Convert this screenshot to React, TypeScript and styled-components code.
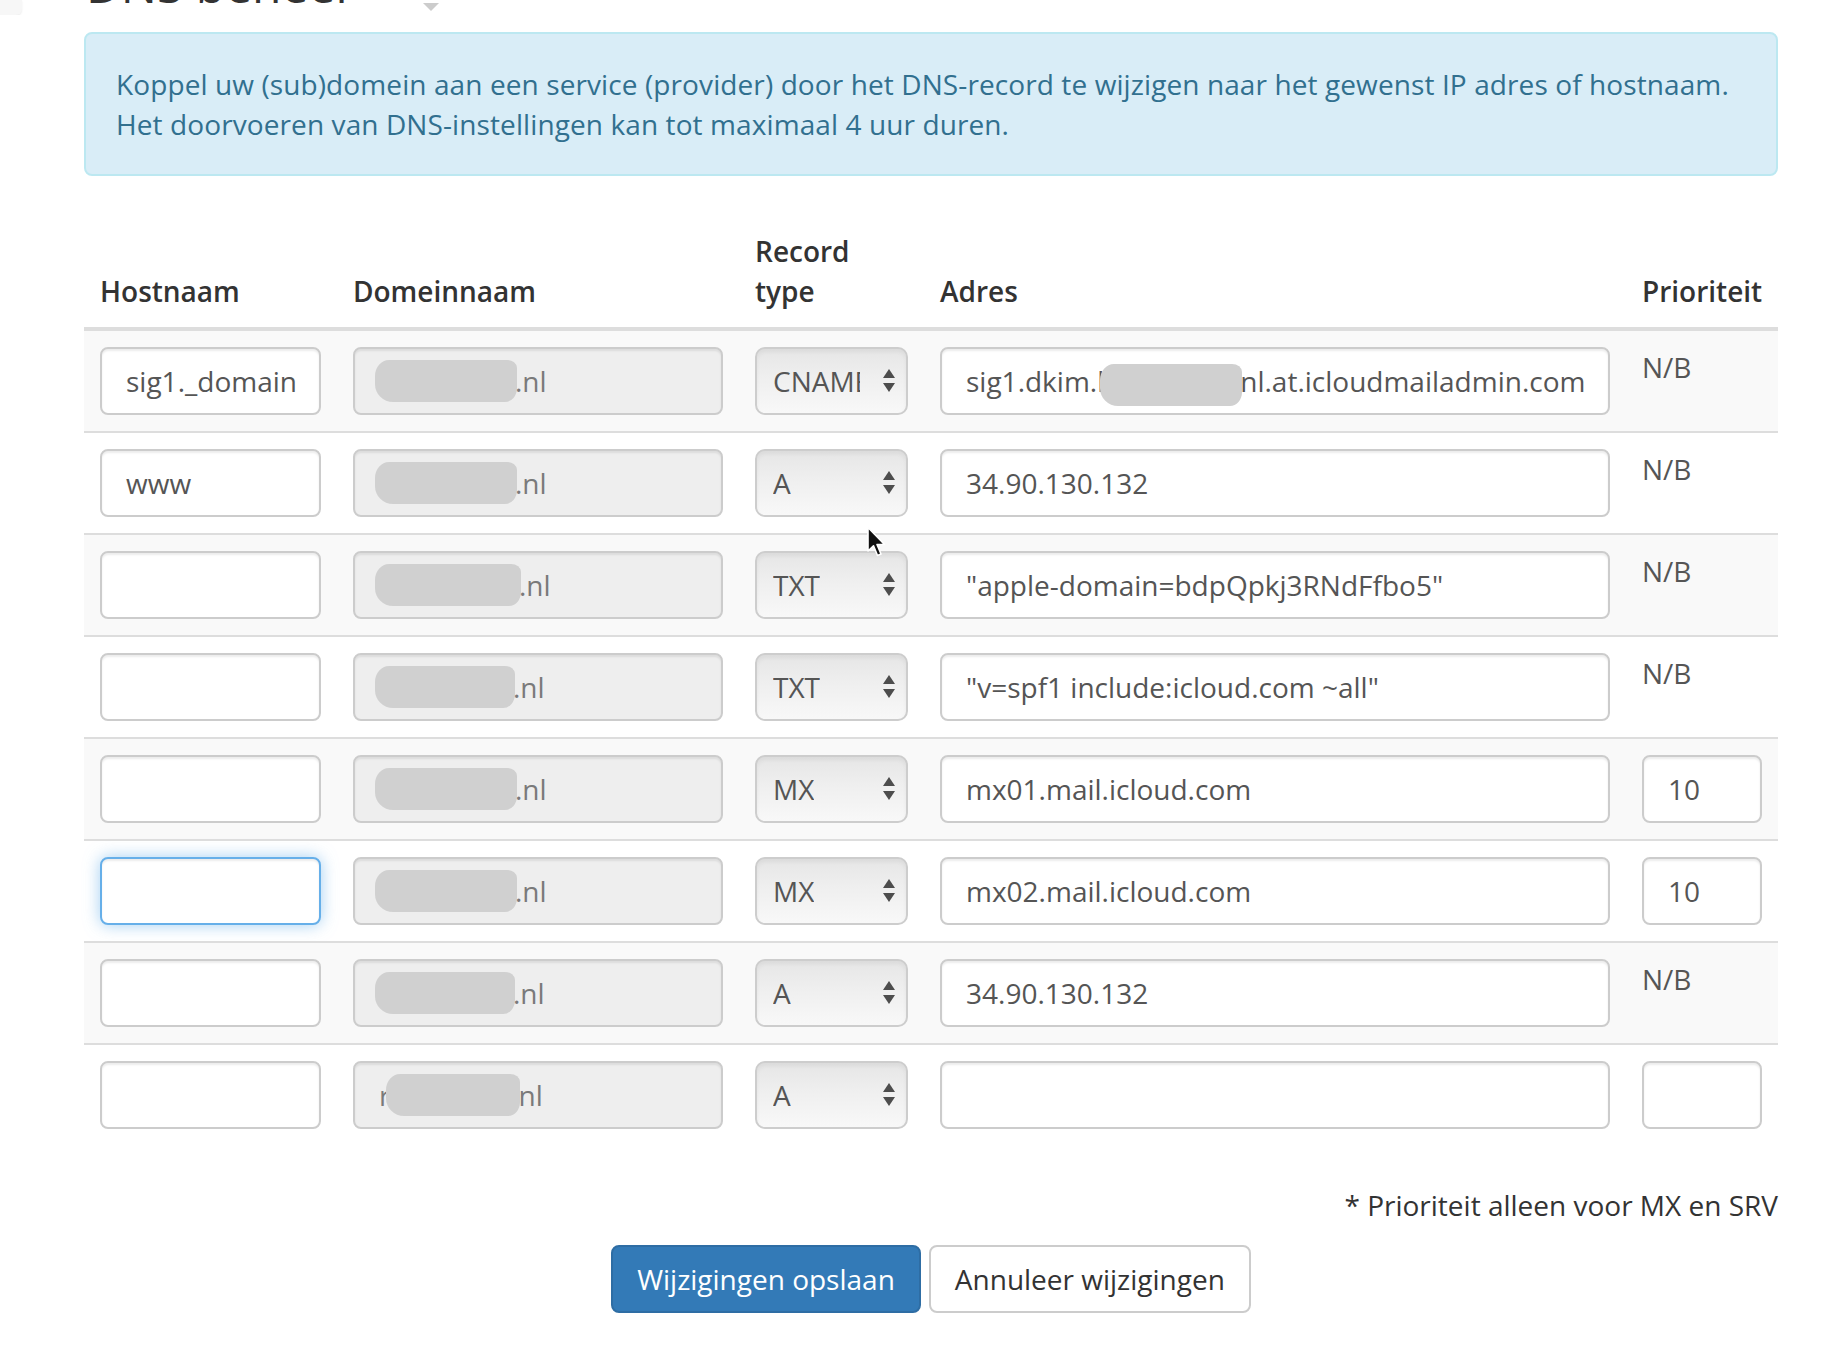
import React from "react";
import styled, { createGlobalStyle, css } from "styled-components";

const GlobalStyle = createGlobalStyle`
  html, body {
    margin: 0;
    padding: 0;
    background: #fff;
  }
  body {
    font-family: "Open Sans", "Liberation Sans", sans-serif;
    font-size: 28px;
    line-height: 40px;
    color: #333;
  }
  * {
    box-sizing: border-box;
  }
`;

interface DnsRecord {
  host: string;
  domainPrefix?: string;
  domainSuffix: string;
  smudgeWidth: number;
  type: string;
  address: React.ReactNode;
  priority: string | null;
  focused?: boolean;
}

const COLUMN_WIDTHS = [253, 402, 185, 702, 152];

const Page = styled.div`
  position: relative;
  width: 100%;
  min-height: 1359px;
  overflow: hidden;
`;

const TopStrip = styled.div`
  display: flex;
  align-items: flex-start;
  height: 15px;
  overflow: hidden;
`;

const SideTab = styled.div`
  width: 22px;
  height: 15px;
  background: #f7f7f7;
  border-radius: 0 0 6px 0;
  box-shadow: 0 1px 2px rgba(0, 0, 0, 0.08);
`;

const TitleGroup = styled.div`
  width: 353px;
  margin-left: 64px;
  display: flex;
  justify-content: space-between;
  align-items: flex-start;
`;

const Title = styled.h3`
  margin: -39px 0 0;
  font-size: 48px;
  line-height: 48px;
  font-weight: 400;
  color: #333;
  white-space: nowrap;
`;

const Caret = styled.div`
  margin-top: 3px;
  width: 0;
  height: 0;
  border-left: 8px solid transparent;
  border-right: 8px solid transparent;
  border-top: 8px solid #cccccc;
`;

const Content = styled.div`
  margin-left: 84px;
  width: 1694px;
`;

const Alert = styled.div`
  margin-top: 17px;
  padding: 30px;
  border: 2px solid #bce8f1;
  border-radius: 8px;
  background: #d9edf7;
  color: #31708f;
  letter-spacing: 0.1px;
`;

const RecordTable = styled.table`
  margin-top: 40px;
  margin-bottom: 40px;
  width: 100%;
  border-collapse: collapse;
  border-spacing: 0;
  table-layout: fixed;
`;

const HeadCell = styled.th`
  padding: 15px 16px 16px;
  text-align: left;
  vertical-align: bottom;
  font-weight: 600;
  color: #333;
  border-bottom: 4px solid #dddddd;
`;

const Body = styled.tbody`
  & > tr + tr > td {
    border-top: 2px solid #dddddd;
  }
`;

const Row = styled.tr<{ $striped: boolean }>`
  background: ${({ $striped }) => ($striped ? "#f9f9f9" : "#ffffff")};
`;

const Cell = styled.td`
  padding: 16px;
  vertical-align: top;
`;

const fieldBase = css`
  height: 68px;
  padding: 12px 24px;
  border: 2px solid #cccccc;
  border-radius: 8px;
  font-size: 28px;
  line-height: 40px;
  color: #555;
  white-space: nowrap;
  overflow: hidden;
  box-shadow: inset 0 2px 2px rgba(0, 0, 0, 0.075);
`;

const TextField = styled.div<{ $focused?: boolean }>`
  ${fieldBase};
  background: #fff;
  ${({ $focused }) =>
    $focused &&
    css`
      border-color: #66afe9;
      box-shadow: inset 0 2px 2px rgba(0, 0, 0, 0.075),
        0 0 16px rgba(102, 175, 233, 0.6);
    `}
`;

const ReadonlyField = styled.div`
  ${fieldBase};
  background: #eeeeee;
  color: #7a7a7a;
  display: flex;
  align-items: center;
`;

const Smudge = styled.span<{ $w: number }>`
  display: inline-block;
  width: ${({ $w }) => $w}px;
  height: 42px;
  margin-left: -4px;
  margin-right: -2px;
  background: #d0d0d0;
  border-radius: 14px 10px 12px 18px / 16px 8px 14px 18px;
  vertical-align: middle;
`;

const SelectBox = styled.div`
  height: 68px;
  padding: 12px 10px 12px 16px;
  border: 2px solid #cdcdcd;
  border-radius: 10px;
  background: linear-gradient(to bottom, #e6e6e6 0%, #efefef 45%, #f8f8f8 100%);
  box-shadow: inset 0 3px 4px rgba(0, 0, 0, 0.05);
  display: flex;
  align-items: center;
  justify-content: space-between;
  color: #555;
`;

const SelectValue = styled.span`
  display: block;
  max-width: 87px;
  overflow: hidden;
  white-space: nowrap;
`;

const SelectArrows = styled.svg`
  flex: none;
  width: 14px;
  height: 26px;
`;

const PriorityText = styled.div`
  color: #555;
`;

const Footnote = styled.p`
  margin: 0 0 20px;
  text-align: right;
  color: #333;
`;

const Actions = styled.div`
  display: flex;
  justify-content: center;
  gap: 8px;
`;

const Button = styled.button<{ $primary?: boolean }>`
  height: 68px;
  padding: 12px 24px;
  border-radius: 8px;
  font-family: "Open Sans", "Liberation Sans", sans-serif;
  font-size: 28px;
  line-height: 40px;
  border: 2px solid ${({ $primary }) => ($primary ? "#2e6da4" : "#cccccc")};
  background: ${({ $primary }) => ($primary ? "#337ab7" : "#ffffff")};
  color: ${({ $primary }) => ($primary ? "#ffffff" : "#333333")};
`;

const Pointer = styled.svg`
  position: absolute;
  left: 866px;
  top: 526px;
  width: 22px;
  height: 33px;
`;

const records: DnsRecord[] = [
  {
    host: "sig1._domain",
    domainSuffix: ".nl",
    smudgeWidth: 142,
    type: "CNAME",
    address: (
      <>
        sig1.dkim.l
        <Smudge $w={142} />
        nl.at.icloudmailadmin.com
      </>
    ),
    priority: null,
  },
  { host: "www", domainSuffix: ".nl", smudgeWidth: 142, type: "A", address: "34.90.130.132", priority: null },
  {
    host: "",
    domainSuffix: ".nl",
    smudgeWidth: 146,
    type: "TXT",
    address: "\"apple-domain=bdpQpkj3RNdFfbo5\"",
    priority: null,
  },
  {
    host: "",
    domainSuffix: ".nl",
    smudgeWidth: 140,
    type: "TXT",
    address: "\"v=spf1 include:icloud.com ~all\"",
    priority: null,
  },
  { host: "", domainSuffix: ".nl", smudgeWidth: 142, type: "MX", address: "mx01.mail.icloud.com", priority: "10" },
  {
    host: "",
    domainSuffix: ".nl",
    smudgeWidth: 142,
    type: "MX",
    address: "mx02.mail.icloud.com",
    priority: "10",
    focused: true,
  },
  { host: "", domainSuffix: ".nl", smudgeWidth: 140, type: "A", address: "34.90.130.132", priority: null },
  { host: "", domainPrefix: "r", domainSuffix: "nl", smudgeWidth: 134, type: "A", address: "", priority: "" },
];

const Arrows = () => (
  <SelectArrows viewBox="0 0 14 26">
    <path d="M7 1 L13 10 L1 10 Z" fill="#4d4d4d" />
    <path d="M1 15 L13 15 L7 24 Z" fill="#4d4d4d" />
  </SelectArrows>
);

export default function App() {
  return (
    <Page>
      <GlobalStyle />
      <TopStrip>
        <SideTab />
        <TitleGroup>
          <Title>DNS beheer</Title>
          <Caret />
        </TitleGroup>
      </TopStrip>
      <Content>
        <Alert>
          Koppel uw (sub)domein aan een service (provider) door het DNS-record te wijzigen naar het
          gewenst IP adres of hostnaam.
          <br />
          Het doorvoeren van DNS-instellingen kan tot maximaal 4 uur duren.
        </Alert>
        <RecordTable>
          <colgroup>
            {COLUMN_WIDTHS.map((w, i) => (
              <col key={`col-${i}`} style={{ width: w }} />
            ))}
          </colgroup>
          <thead>
            <tr>
              <HeadCell>Hostnaam</HeadCell>
              <HeadCell>Domeinnaam</HeadCell>
              <HeadCell>
                Record
                <br />
                type
              </HeadCell>
              <HeadCell>Adres</HeadCell>
              <HeadCell>Prioriteit</HeadCell>
            </tr>
          </thead>
          <Body>
            {records.map((rec, idx) => (
              <Row key={`record-${idx}`} $striped={idx % 2 === 0}>
                <Cell>
                  <TextField $focused={rec.focused}>{rec.host || "\u00a0"}</TextField>
                </Cell>
                <Cell>
                  <ReadonlyField>
                    {rec.domainPrefix}
                    <Smudge $w={rec.smudgeWidth} />
                    {rec.domainSuffix}
                  </ReadonlyField>
                </Cell>
                <Cell>
                  <SelectBox>
                    <SelectValue>{rec.type}</SelectValue>
                    <Arrows />
                  </SelectBox>
                </Cell>
                <Cell>
                  <TextField>{rec.address || "\u00a0"}</TextField>
                </Cell>
                <Cell>
                  {rec.priority === null ? (
                    <PriorityText>N/B</PriorityText>
                  ) : (
                    <TextField>{rec.priority || "\u00a0"}</TextField>
                  )}
                </Cell>
              </Row>
            ))}
          </Body>
        </RecordTable>
        <Footnote>* Prioriteit alleen voor MX en SRV</Footnote>
        <Actions>
          <Button $primary>Wijzigingen opslaan</Button>
          <Button>Annuleer wijzigingen</Button>
        </Actions>
      </Content>
      <Pointer viewBox="0 0 22 33">
        <path
          d="M2 1.5 L2 25 L7.5 19.8 L11.5 29.5 L15 28 L11 18.5 L18.5 18.5 Z"
          fill="#111"
          stroke="#fff"
          strokeWidth="1.6"
          strokeLinejoin="round"
        />
      </Pointer>
    </Page>
  );
}
